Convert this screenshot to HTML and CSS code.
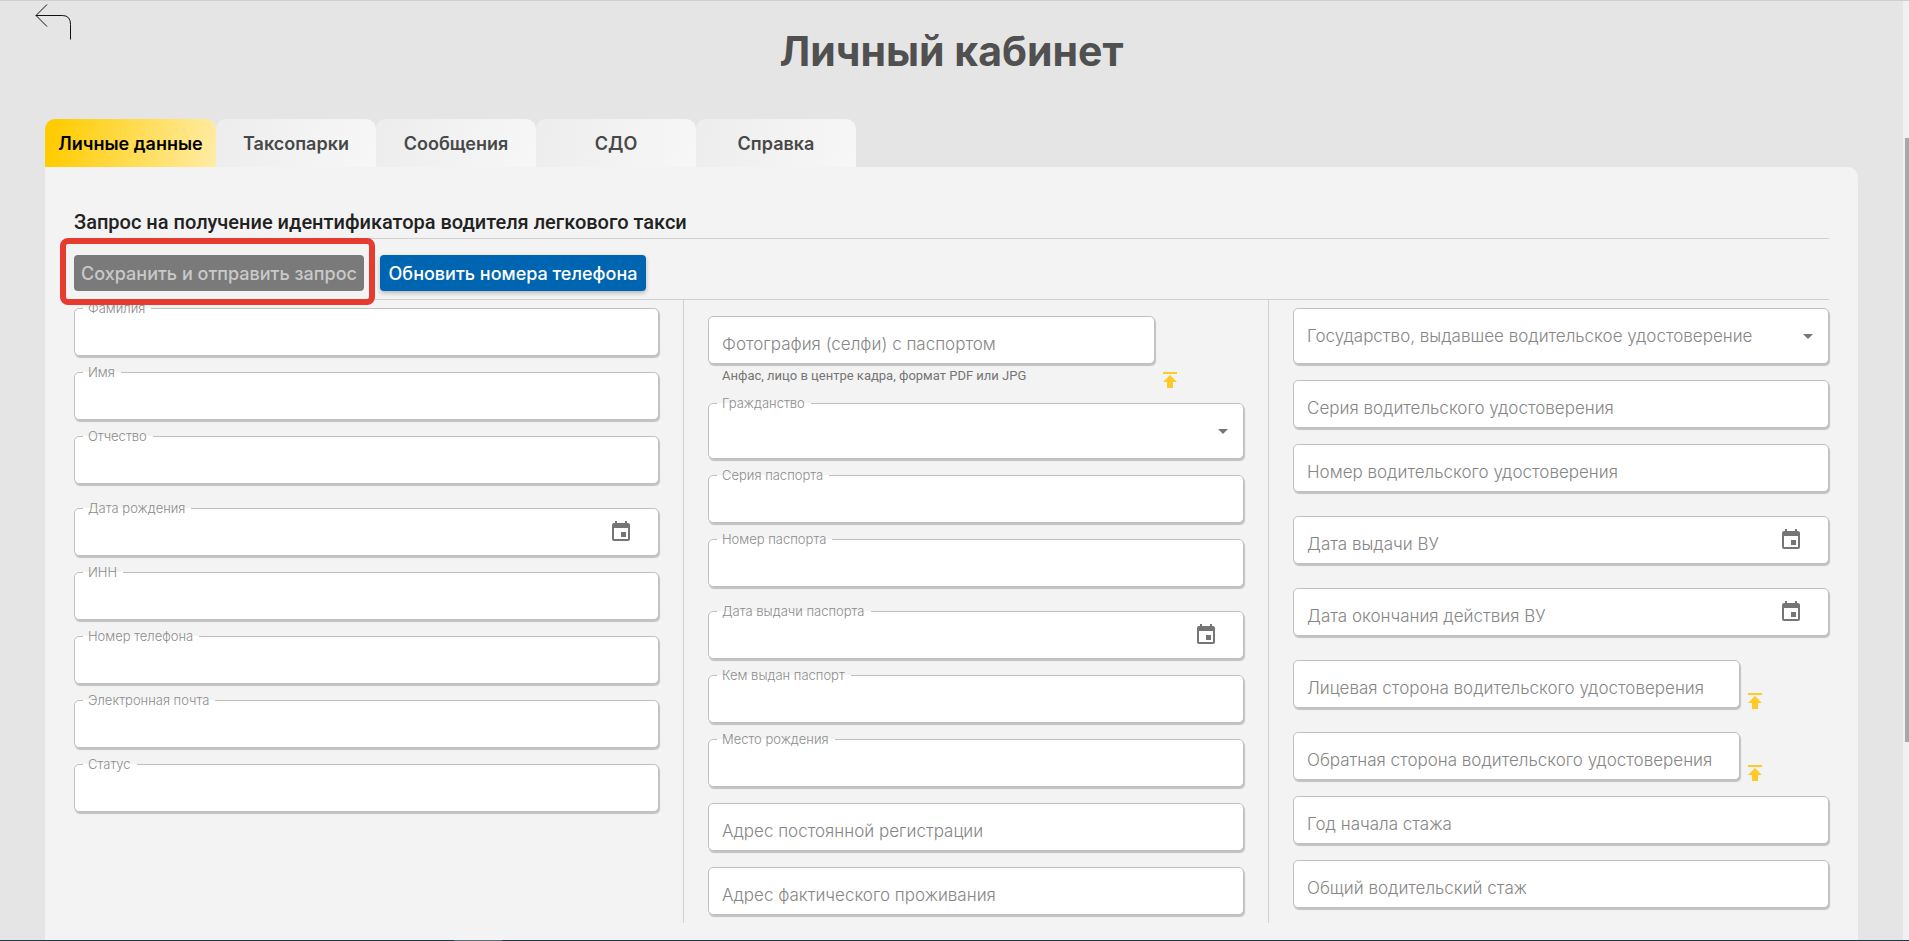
FILE: index.html
```html
<!DOCTYPE html>
<html lang="ru">
<head>
<meta charset="utf-8">
<title>Личный кабинет</title>
<link rel="stylesheet" href="styles.css">
</head>
<body>
<svg class="sprite" aria-hidden="true">
  <symbol id="event" viewBox="0 0 24 24"><path d="M17 12h-5v5h5v-5zM16 1v2H8V1H6v2H5c-1.11 0-1.99.9-1.99 2L3 19c0 1.1.89 2 2 2h14c1.1 0 2-.9 2-2V5c0-1.1-.9-2-2-2h-1V1h-2zm3 18H5V8h14v11z"/></symbol>
  <symbol id="publish" viewBox="0 0 24 24"><path d="M5 4v2h14V4H5zm0 10h4v6h6v-6h4l-7-7-7 7z"/></symbol>
</svg>
<div class="page">
  <header class="header">
    <button class="back" type="button" aria-label="Назад">
      <svg width="37" height="36" viewBox="0 0 37 36"><path d="M12 .5 1 11.5 12 22.500M1 11.500H27.500Q35.500 11.500 35.500 20.500V35.500"/></svg>
    </button>
    <h1 class="title">Личный кабинет</h1>
  </header>
  <nav class="tabs">
    <button class="tab tab-active" type="button">Личные данные</button>
    <button class="tab" type="button">Таксопарки</button>
    <button class="tab" type="button">Сообщения</button>
    <button class="tab" type="button">СДО</button>
    <button class="tab" type="button">Справка</button>
  </nav>
  <main class="panel">
    <h2 class="heading">Запрос на получение идентификатора водителя легкового такси</h2>
    <div class="toolbar">
      <div class="highlight"><button class="btn btn-disabled" type="button" disabled>Сохранить и отправить запрос</button></div>
      <button class="btn btn-primary" type="button">Обновить номера телефона</button>
    </div>
    <form class="columns">
      <div class="column">
        <div class="field floated"><input id="surname" type="text"><label for="surname">Фамилия</label></div>
        <div class="field floated"><input id="name" type="text"><label for="name">Имя</label></div>
        <div class="field floated"><input id="patronymic" type="text"><label for="patronymic">Отчество</label></div>
        <div class="field floated spaced"><input id="birth" type="text"><label for="birth">Дата рождения</label><button class="calendar" type="button" aria-label="Календарь"><svg><use href="#event"/></svg></button></div>
        <div class="field floated"><input id="inn" type="text"><label for="inn">ИНН</label></div>
        <div class="field floated"><input id="phone" type="tel"><label for="phone">Номер телефона</label></div>
        <div class="field floated"><input id="email" type="email"><label for="email">Электронная почта</label></div>
        <div class="field floated"><input id="status" type="text"><label for="status">Статус</label></div>
      </div>
      <div class="column divided">
        <div class="upload-row with-hint spaced">
          <div class="upload-field">
            <div class="field resting"><input id="photo" type="text"><label for="photo">Фотография (селфи) с паспортом</label></div>
            <p class="hint">Анфас, лицо в центре кадра, формат PDF или JPG</p>
          </div>
          <button class="upload" type="button" aria-label="Загрузить"><svg><use href="#publish"/></svg></button>
        </div>
        <div class="field floated choice"><select id="citizenship"><option></option></select><label for="citizenship">Гражданство</label></div>
        <div class="field floated"><input id="series" type="text"><label for="series">Серия паспорта</label></div>
        <div class="field floated"><input id="number" type="text"><label for="number">Номер паспорта</label></div>
        <div class="field floated spaced"><input id="issued" type="text"><label for="issued">Дата выдачи паспорта</label><button class="calendar" type="button" aria-label="Календарь"><svg><use href="#event"/></svg></button></div>
        <div class="field floated"><input id="issuer" type="text"><label for="issuer">Кем выдан паспорт</label></div>
        <div class="field floated"><input id="birthplace" type="text"><label for="birthplace">Место рождения</label></div>
        <div class="field resting"><input id="registration" type="text"><label for="registration">Адрес постоянной регистрации</label></div>
        <div class="field resting"><input id="residence" type="text"><label for="residence">Адрес фактического проживания</label></div>
      </div>
      <div class="column divided">
        <div class="field resting choice"><select id="country"><option></option></select><label for="country">Государство, выдавшее водительское удостоверение</label></div>
        <div class="field resting"><input id="lseries" type="text"><label for="lseries">Серия водительского удостоверения</label></div>
        <div class="field resting"><input id="lnumber" type="text"><label for="lnumber">Номер водительского удостоверения</label></div>
        <div class="field resting spaced"><input id="lissued" type="text"><label for="lissued">Дата выдачи ВУ</label><button class="calendar" type="button" aria-label="Календарь"><svg><use href="#event"/></svg></button></div>
        <div class="field resting spaced"><input id="lexpires" type="text"><label for="lexpires">Дата окончания действия ВУ</label><button class="calendar" type="button" aria-label="Календарь"><svg><use href="#event"/></svg></button></div>
        <div class="upload-row spaced">
          <div class="upload-field"><div class="field resting"><input id="front" type="text"><label for="front">Лицевая сторона водительского удостоверения</label></div></div>
          <button class="upload" type="button" aria-label="Загрузить"><svg><use href="#publish"/></svg></button>
        </div>
        <div class="upload-row spaced">
          <div class="upload-field"><div class="field resting"><input id="rear" type="text"><label for="rear">Обратная сторона водительского удостоверения</label></div></div>
          <button class="upload" type="button" aria-label="Загрузить"><svg><use href="#publish"/></svg></button>
        </div>
        <div class="field resting"><input id="since" type="text"><label for="since">Год начала стажа</label></div>
        <div class="field resting"><input id="total" type="text"><label for="total">Общий водительский стаж</label></div>
      </div>
    </form>
  </main>
</div>
<div class="scrollbar"><div class="thumb"></div></div>
<div class="taskbar"><div class="taskbar-item"></div></div>
</body>
</html>
```

FILE: styles.css
```css
* { box-sizing: border-box; }

body {
  margin: 0;
  height: 100vh;
  display: grid;
  grid-template-columns: 1fr 6px;
  grid-template-rows: 1fr 1px;
  overflow: hidden;
  border-top: 1px solid #cfcfcf;
  background: #e5e5e5;
  font-family: Inter, "Open Sans", sans-serif;
  color: #222;
}

button, input, select { font: inherit; }

.sprite { position: absolute; width: 0; height: 0; }

.page {
  display: flex;
  flex-direction: column;
  min-height: 0;
  padding: 0 45px;
}

.header {
  position: relative;
  flex: none;
  height: 118px;
  padding-top: 26px;
}

.back {
  position: absolute;
  top: 3px;
  left: -10px;
  padding: 0;
  border: 0;
  background: none;
}

.back svg { display: block; fill: none; stroke: #111; stroke-width: 1; }

.title {
  margin: 0;
  font-size: 41px;
  line-height: 48px;
  font-weight: 700;
  text-align: center;
  color: #505050;
}

.tabs { display: flex; flex: none; }

.tab {
  min-width: 160px;
  height: 48px;
  padding: 0 12px;
  border: 0;
  border-radius: 10px 10px 0 0;
  background: linear-gradient(100deg, #ededed, #f7f7f7);
  font-size: 18px;
  font-weight: 600;
  color: #484848;
}

.tab-active {
  min-width: 171px;
  background: linear-gradient(100deg, #ffcc00 5%, #ffeca6);
  color: #000;
}

.panel {
  flex: 1 0 auto;
  padding: 39px 29px 16px;
  border-radius: 0 10px 0 0;
  background: #f3f3f3;
}

.heading {
  margin: 0;
  border-bottom: 1px solid #d0d0d0;
  font-family: Roboto, sans-serif;
  font-size: 20px;
  line-height: 32px;
  font-weight: 500;
}

.toolbar {
  display: flex;
  gap: 16px;
  padding: 16px 0 8px;
  border-bottom: 1px solid #d0d0d0;
}

.highlight { position: relative; }

.highlight::after {
  content: "";
  position: absolute;
  z-index: 2;
  inset: -17px -11px -14px -14px;
  border: 6px solid #e63c30;
  border-radius: 8px;
  pointer-events: none;
}

.btn {
  display: block;
  height: 36px;
  padding: 0;
  border: 0;
  border-radius: 4px;
  font-size: 18px;
  font-weight: 500;
}

.btn-disabled { width: 290px; background: #7a7a7a; color: #c9c9c9; }

.btn-primary {
  width: 266px;
  background: #0065b1;
  box-shadow: 0 2px 4px rgba(0, 0, 0, .25);
  color: #fff;
}

.columns { display: grid; grid-template-columns: repeat(3, 1fr); }

.column {
  display: flex;
  flex-direction: column;
  gap: 16px;
  padding: 8px 0;
}

.divided {
  margin-left: 24px;
  padding-left: 24px;
  border-left: 1px solid #d0d0d0;
}

.spaced { margin-top: 8px; }

.field { position: relative; height: 48px; }

.choice { height: 56px; }

.field input, .field select {
  display: block;
  width: 100%;
  height: 100%;
  padding: 8px 14px 0;
  border: 1px solid #c0c0c0;
  border-radius: 5px;
  outline: 0;
  appearance: none;
  background: #fff;
  box-shadow: 1px 2px 1px #c2c2c2;
  font-size: 17px;
}

.choice::after {
  content: "";
  position: absolute;
  top: 26px;
  right: 16px;
  border: 5px solid transparent;
  border-top-color: #757575;
  border-bottom: 0;
}

.field label {
  position: absolute;
  font-weight: 300;
  white-space: nowrap;
  pointer-events: none;
}

.floated label {
  top: -9px;
  left: 9px;
  padding: 0 6px 0 5px;
  background: linear-gradient(#f3f3f3 50%, #fff 50%);
  font-size: 13px;
  line-height: 18px;
  color: #8c8c8c;
}

.resting label {
  top: 16px;
  left: 14px;
  font-size: 17px;
  line-height: 24px;
  color: #868686;
}

.calendar, .upload {
  width: 24px;
  height: 24px;
  padding: 0;
  border: 0;
  background: none;
}

.calendar { position: absolute; top: 12px; right: 26px; }

.calendar svg, .upload svg { display: block; width: 24px; height: 24px; }

.calendar svg { fill: #757575; }

.upload svg { fill: #ffc928; }

.upload-row {
  display: grid;
  grid-template-columns: 5fr 1fr;
  height: 48px;
}

.upload { margin: 29px 0 0 3px; }

.with-hint { height: 71px; }

.with-hint .upload { margin-top: 52px; }

.hint {
  margin: 4px 14px 0;
  font-family: Roboto, sans-serif;
  font-size: 13px;
  line-height: 16px;
  color: #757575;
}

.scrollbar { background: #f1f1f1; padding: 137px 0 0 2px; }

.thumb { height: 604px; background: #a8a8a8; }

.taskbar { grid-column: 1 / -1; z-index: 3; background: #1f3a4b; }

.taskbar-item { width: 48px; height: 1px; margin-left: 454px; background: #5a7080; }
```
